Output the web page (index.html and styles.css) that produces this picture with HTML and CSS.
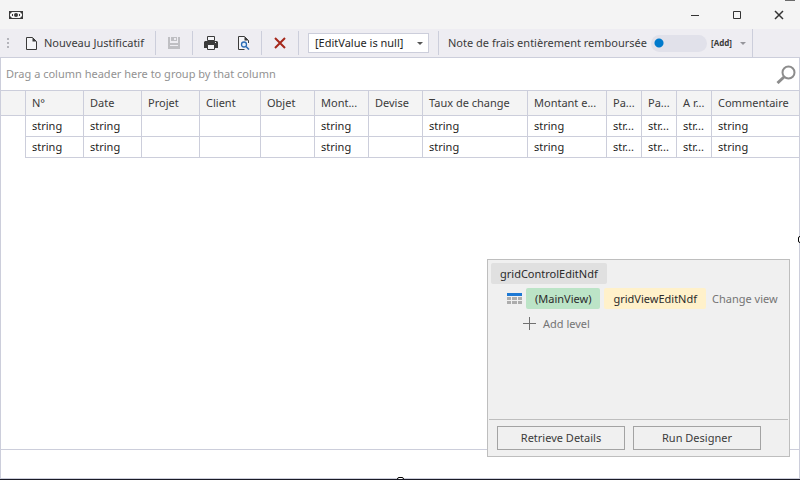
FILE: index.html
```
<!DOCTYPE html>
<html lang="fr">
<head>
<meta charset="utf-8">
<title>Note de frais</title>
<link rel="stylesheet" href="styles.css">
</head>
<body>
<div class="window">
  <header class="titlebar">
    <svg class="app-icon" width="14" height="8" viewBox="0 0 14 8"><path fill="#3b3b3b" fill-rule="evenodd" d="M0 0h14v8H0zM3 1L1 3v2l2 2h8l2-2V3l-2-2z"/><circle cx="7" cy="4" r="2" fill="#3b3b3b"/><path fill="#3b3b3b" d="M3 3h1v2H3zM10 3h1v2h-1z"/></svg>
    <div class="window-buttons">
      <button class="window-button" aria-label="Minimize"><svg width="10" height="10"><path d="M1 5.5h8" stroke="#333"/></svg></button>
      <button class="window-button" aria-label="Maximize"><svg width="10" height="10"><path d="M1.5 1.5h7v7h-7z" fill="none" stroke="#333"/></svg></button>
      <button class="window-button" aria-label="Close"><svg width="10" height="10"><path d="M1 1l8 8M9 1L1 9" stroke="#333" stroke-width="1.5"/></svg></button>
    </div>
    <span class="top-mark"></span>
  </header>

  <div class="toolbar">
    <svg class="grip" width="2" height="10"><path fill="#b4b4bb" d="M0 0h2v2H0zM0 4h2v2H0zM0 8h2v2H0z"/></svg>
    <button class="tool tool-new"><svg width="11" height="13"><path d="M.5.5h6l4 4v8H.5z" fill="#f5f5f8" stroke="#3b3b3b"/><path d="M6.5.5v4h4z" fill="#3b3b3b"/></svg><span>Nouveau Justificatif</span></button>
    <span class="separator"></span>
    <button class="tool" aria-label="Enregistrer"><svg width="12" height="12"><path fill="#bfbfc3" d="M0 0h2v6h8V0h2v12H0z"/><path fill="#bfbfc3" d="M3 0h6v4H3z"/><path fill="#eeedf2" d="M6 1h2v2H6zM2 8h8v1H2z"/></svg></button>
    <span class="separator"></span>
    <div class="tool-pair">
      <button class="tool" aria-label="Imprimer"><svg width="14" height="14"><path fill="#3b3b3b" d="M1 5h12l1 1v6H0V6z"/><path d="M3.5.5h7v4h-7z" fill="#f5f5f8" stroke="#3b3b3b"/><path d="M3.5 8.5h7v5h-7z" fill="#f5f5f8" stroke="#3b3b3b"/><path fill="#eee" d="M11 6h1v1h-1z"/></svg></button>
      <button class="tool" aria-label="Aperçu"><svg width="12" height="14"><path d="M10.5 7V4.500L6.500.500h-6v13h6" fill="#f5f5f8" stroke="#3b3b3b"/><path d="M6.500.500v4h4z" fill="#3b3b3b"/><circle cx="6" cy="8.500" r="2.500" fill="#e4effa" stroke="#2d6cb5" stroke-width="1.300"/><path d="M8 10.500l3 3" stroke="#2d6cb5" stroke-width="1.600"/></svg></button>
    </div>
    <span class="separator"></span>
    <button class="tool" aria-label="Supprimer"><svg width="12" height="12"><path d="M1 1l10 10M11 1L1 11" stroke="#a5281b" stroke-width="2"/></svg></button>
    <span class="separator"></span>
    <div class="combo">
      <select aria-label="Valeur"><option>[EditValue is null]</option></select>
      <svg class="combo-arrow" width="6" height="3"><path fill="#555" d="M0 0h6L3 3z"/></svg>
    </div>
    <span class="separator"></span>
    <label class="refund">Note de frais entièrement remboursée<input class="toggle" type="checkbox" role="switch"></label>
    <button class="add">[Add]<svg width="6" height="3"><path fill="#95959b" d="M0 0h6L3 3z"/></svg></button>
    <span class="separator separator-end"></span>
  </div>

  <main class="grid">
    <div class="group-panel">
      <span>Drag a column header here to group by that column</span>
      <svg width="20" height="19"><circle cx="12.500" cy="7.500" r="6" fill="none" stroke="#8c8c8c" stroke-width="2"/><path d="M8 12l-6.500 6" stroke="#8c8c8c" stroke-width="3"/></svg>
    </div>
    <table>
      <colgroup><col class="w-mark"><col class="w-short"><col class="w-short"><col class="w-short"><col class="w-client"><col class="w-medium"><col class="w-medium"><col class="w-medium"><col class="w-rate"><col class="w-amount"><col class="w-tiny"><col class="w-tiny"><col class="w-tiny"><col></colgroup>
      <thead><tr><th></th><th>N°</th><th>Date</th><th>Projet</th><th>Client</th><th>Objet</th><th>Mont...</th><th>Devise</th><th>Taux de change</th><th>Montant e...</th><th>Pa...</th><th>Pa...</th><th>A r...</th><th>Commentaire</th></tr></thead>
      <tbody>
        <tr><td></td><td>string</td><td>string</td><td></td><td></td><td></td><td>string</td><td></td><td>string</td><td>string</td><td>str...</td><td>str...</td><td>str...</td><td>string</td></tr>
        <tr><td></td><td>string</td><td>string</td><td></td><td></td><td></td><td>string</td><td></td><td>string</td><td>string</td><td>str...</td><td>str...</td><td>str...</td><td>string</td></tr>
      </tbody>
    </table>
    <div class="grid-footer"></div>
  </main>

  <section class="designer">
    <div class="levels">
      <button class="tag tag-control">gridControlEditNdf</button>
      <div class="level">
        <svg width="15" height="11"><path fill="#1c78d4" d="M0 0h15v3H0z"/><path fill="#adadad" d="M0 4h4v3H0zM5 4h5v3H5zM11 4h4v3h-4zM0 8h4v3H0zM5 8h5v3H5zM11 8h4v3h-4z"/></svg>
        <button class="tag tag-main">(MainView)</button>
        <button class="tag tag-view">gridViewEditNdf</button>
        <a href="#">Change view</a>
      </div>
      <a class="add-level" href="#"><svg width="13" height="13"><path d="M6.500 0v13M0 6.500h13" stroke="#707070"/></svg>Add level</a>
    </div>
    <div class="actions">
      <button>Retrieve Details</button>
      <button>Run Designer</button>
    </div>
  </section>
  <span class="handle handle-right"></span>
  <span class="handle handle-bottom"></span>
</div>
</body>
</html>
```
FILE: styles.css
```
* { box-sizing: border-box; }

body {
  margin: 0;
  font: 11px/16px "Noto Sans", sans-serif;
  color: #3b3b3b;
}

button, select, input {
  margin: 0;
  padding: 0;
  border: 0;
  background: none;
  font: inherit;
  color: inherit;
}

svg { display: block; flex: none; }
a { color: #747474; text-decoration: none; }

.window {
  position: relative;
  display: flex;
  flex-direction: column;
  height: 100vh;
  overflow: hidden;
  border-bottom: 1px solid #1b1b26;
}

.titlebar {
  display: flex;
  align-items: center;
  justify-content: space-between;
  height: 29px;
  flex: none;
  padding-left: 9px;
  background: #f4f4f4;
}

.window-buttons { display: flex; }
.window-button {
  display: flex;
  align-items: center;
  justify-content: center;
  width: 42px;
  height: 28px;
}
.top-mark {
  position: absolute;
  top: 0;
  right: 5px;
  width: 10px;
  height: 1px;
  background: #6b6b6b;
}

.toolbar {
  display: flex;
  align-items: center;
  height: 28px;
  flex: none;
  padding-left: 7px;
  background: #eeedf2;
  white-space: nowrap;
}
.tool { display: flex; align-items: center; gap: 7px; }
.tool-new { margin-left: 17px; width: 119px; margin-right: 10px; }
.separator + .tool { margin: 0 12px; }
.tool-pair { display: flex; align-items: center; gap: 20px; margin: 0 11px; }
.separator { width: 1px; height: 24px; flex: none; background: #cccedb; }
.separator-end { height: 28px; margin-left: 6px; }

.combo { position: relative; margin: 0 9px; }
.combo select {
  display: block;
  appearance: none;
  width: 121px;
  height: 20px;
  padding-left: 6px;
  border: 1px solid #cccedb;
  background: #fff;
  color: #1e1e1e;
}
.combo-arrow { position: absolute; right: 6px; top: 9px; }

.refund { display: flex; align-items: center; gap: 4px; margin-left: 9px; }
.toggle {
  appearance: none;
  width: 56px;
  height: 17px;
  border-radius: 9px;
  background: radial-gradient(circle at 8px 8px, #007acc 4px, transparent 5px) #e1e1ea;
}
.add {
  display: flex;
  align-items: center;
  gap: 8px;
  margin-left: 4px;
  font-size: 8px;
  font-weight: 700;
}

.grid {
  display: flex;
  flex-direction: column;
  flex: 1;
  border: 1px solid #cccedb;
  background: #fff;
}
.group-panel {
  display: flex;
  align-items: center;
  justify-content: space-between;
  height: 32px;
  padding: 0 3px 0 5px;
  color: #929292;
}

table {
  width: 100%;
  table-layout: fixed;
  border-collapse: separate;
  border-spacing: 0;
}
.w-mark { width: 25px; }
.w-short { width: 58px; }
.w-client { width: 61px; }
.w-medium { width: 54px; }
.w-amount { width: 79px; }
.w-tiny { width: 35px; }
.w-rate { width: 105px; }

th, td {
  height: 21px;
  padding: 0 4px 0 6px;
  border: solid #cccedb;
  border-width: 0 1px 1px 0;
  text-align: left;
  white-space: nowrap;
}
th {
  height: 26px;
  border-top-width: 1px;
  background: #f4f4f4;
  font-weight: 400;
}
td { color: #1e1e1e; }
td:first-child { border-bottom: 0; }
th:last-child, td:last-child { border-right: 0; }

.grid-footer { height: 29px; margin-top: auto; border-top: 1px solid #cccedb; }

.designer {
  position: absolute;
  right: 10px;
  bottom: 22px;
  display: flex;
  flex-direction: column;
  width: 303px;
  height: 198px;
  padding: 0 1px;
  border: 1px solid #bebebe;
  background: #f0f0f0;
}
.levels { flex: 1; padding: 3px 2px; }
.tag { display: block; height: 21px; padding: 0 9px; border-radius: 2px; color: #2b2b2b; }
.tag-control { background: #e0e0e0; }
.tag-main { background: #bce4c7; }
.tag-view { background: #fff1ca; }
.level { display: flex; align-items: center; gap: 4px; margin: 4px 0 4px 16px; white-space: nowrap; }
.level a { margin-left: 2px; }
.add-level { display: flex; align-items: center; gap: 7px; height: 21px; margin-left: 32px; }
.actions {
  display: flex;
  gap: 8px;
  padding: 6px 8px;
  border-top: 1px solid #bebebe;
}
.actions button { width: 128px; height: 24px; border: 1px solid #a3a3a3; }

.handle {
  position: absolute;
  width: 7px;
  height: 7px;
  border: 1px solid #000;
  border-radius: 2px;
  background: #fff;
}
.handle-right { right: -5px; top: 236px; }
.handle-bottom { left: 397px; bottom: -5px; }
```
